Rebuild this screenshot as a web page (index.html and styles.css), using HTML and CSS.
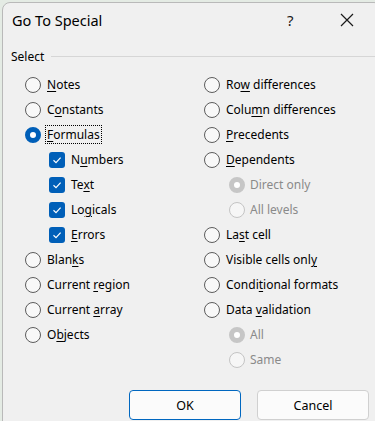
FILE: index.html
```html
<!DOCTYPE html>
<html>
<head>
<meta charset="utf-8">
<link rel="stylesheet" href="styles.css">
</head>
<body>
<div class="dialog">
  <div class="titlebar">
    <span class="title">Go To Special</span>
    <span class="help">?</span>
    <span class="close">
      <svg width="14" height="14" viewBox="0 0 14 14"><path d="M1 1L13 13M13 1L1 13" stroke="#1a1a1a" stroke-width="1.2" fill="none"/></svg>
    </span>
  </div>
  <div class="group-head"><span>Select</span><span class="rule"></span></div>
  <div class="cols">
    <div class="col">
      <div class="row"><span class="radio"></span><span><u>N</u>otes</span></div>
      <div class="row"><span class="radio"></span><span>C<u>o</u>nstants</span></div>
      <div class="row"><span class="radio on"></span><span class="focus"><u>F</u>ormulas</span></div>
      <div class="row sub"><span class="check"><svg width="16" height="16" viewBox="0 0 16 16"><path d="M4.5 8.3L7 10.6L11.6 5.6" stroke="#fff" stroke-width="1.2" fill="none"/></svg></span><span>N<u>u</u>mbers</span></div>
      <div class="row sub"><span class="check"><svg width="16" height="16" viewBox="0 0 16 16"><path d="M4.5 8.3L7 10.6L11.6 5.6" stroke="#fff" stroke-width="1.2" fill="none"/></svg></span><span>Te<u>x</u>t</span></div>
      <div class="row sub"><span class="check"><svg width="16" height="16" viewBox="0 0 16 16"><path d="M4.5 8.3L7 10.6L11.6 5.6" stroke="#fff" stroke-width="1.2" fill="none"/></svg></span><span>Lo<u>g</u>icals</span></div>
      <div class="row sub"><span class="check"><svg width="16" height="16" viewBox="0 0 16 16"><path d="M4.5 8.3L7 10.6L11.6 5.6" stroke="#fff" stroke-width="1.2" fill="none"/></svg></span><span><u>E</u>rrors</span></div>
      <div class="row"><span class="radio"></span><span>Blan<u>k</u>s</span></div>
      <div class="row"><span class="radio"></span><span>Current <u>r</u>egion</span></div>
      <div class="row"><span class="radio"></span><span>Current <u>a</u>rray</span></div>
      <div class="row"><span class="radio"></span><span>O<u>b</u>jects</span></div>
    </div>
    <div class="col right">
      <div class="row"><span class="radio"></span><span>Ro<u>w</u> differences</span></div>
      <div class="row"><span class="radio"></span><span>Colu<u>m</u>n differences</span></div>
      <div class="row"><span class="radio"></span><span><u>P</u>recedents</span></div>
      <div class="row"><span class="radio"></span><span><u>D</u>ependents</span></div>
      <div class="row sub dis"><span class="radio on"></span><span>Direct only</span></div>
      <div class="row sub dis"><span class="radio"></span><span>All levels</span></div>
      <div class="row"><span class="radio"></span><span>La<u>s</u>t cell</span></div>
      <div class="row"><span class="radio"></span><span>Visible cells onl<u>y</u></span></div>
      <div class="row"><span class="radio"></span><span>Condi<u>t</u>ional formats</span></div>
      <div class="row"><span class="radio"></span><span>Data <u>v</u>alidation</span></div>
      <div class="row sub dis"><span class="radio on"></span><span>All</span></div>
      <div class="row sub dis"><span class="radio"></span><span>Same</span></div>
    </div>
  </div>
  <div class="buttons">
    <button class="btn default">OK</button>
    <button class="btn">Cancel</button>
  </div>
</div>
</body>
</html>
```
FILE: styles.css
```css
html, body {
  margin: 0;
  padding: 0;
}
body {
  width: 375px;
  height: 421px;
  overflow: hidden;
  background: #e4ebe4;
  font-family: "Noto Sans", "Open Sans", sans-serif;
  color: #000;
}
.dialog {
  box-sizing: border-box;
  margin: 2px 0 0 2px;
  width: 380px;
  height: 430px;
  background: #f0f0f0;
  border: 1px solid #b9b9b9;
  border-radius: 8px 8px 0 0;
  position: relative;
}
.titlebar {
  height: 34px;
  display: flex;
  align-items: center;
  padding-left: 9px;
}
.title {
  font-size: 14.5px;
  flex: 1;
}
.help {
  font-size: 15px;
  width: 20px;
  margin-right: 33px;
  color: #1a1a1a;
}
.close {
  width: 20px;
  margin-right: 21px;
  display: flex;
  align-items: center;
}
.group-head {
  display: flex;
  align-items: center;
  padding: 9px 6px 0 8px;
  height: 20px;
  font-size: 12px;
}
.rule {
  flex: 1;
  height: 1px;
  background: #d6d6d6;
  margin-left: 7px;
}
.cols {
  display: grid;
  grid-template-columns: 179px 1fr;
  padding-left: 22px;
  margin-top: 6px;
}
.row {
  height: 25px;
  display: flex;
  align-items: center;
  font-size: 12px;
  gap: 6px;
}
.row.sub {
  padding-left: 24px;
}
.col.right .row.sub {
  padding-left: 25px;
  gap: 5px;
}
.row.dis {
  color: #8a8a8a;
}
.radio {
  box-sizing: border-box;
  width: 16px;
  height: 16px;
  border-radius: 50%;
  border: 1px solid #5c5c5c;
  background: #f8f8f8;
  flex: none;
}
.radio.on {
  border: 5px solid #005fb8;
  background: #fff;
}
.dis .radio {
  border-color: #c4c4c4;
  background: #f6f6f6;
}
.dis .radio.on {
  border: 5px solid #c6c6c6;
  background: #fff;
}
.check {
  width: 16px;
  height: 16px;
  border-radius: 3px;
  background: #005fb8;
  flex: none;
  display: flex;
}
.focus {
  outline: 1px dotted #000;
  outline-offset: 0;
  padding: 0 1px;
  margin-left: -1px;
}
u {
  text-decoration-thickness: 1px;
  text-underline-offset: 2px;
}
.buttons {
  position: absolute;
  left: 126px;
  top: 387px;
  display: flex;
  gap: 16px;
}
.btn {
  box-sizing: border-box;
  width: 112px;
  height: 30px;
  border-radius: 4px;
  border: 1px solid #d0d0d0;
  background: #fbfbfb;
  font-family: "Noto Sans", "Open Sans", sans-serif;
  font-size: 12.5px;
  color: #000;
  padding: 0;
}
.btn.default {
  border-color: #0067c0;
}
```
